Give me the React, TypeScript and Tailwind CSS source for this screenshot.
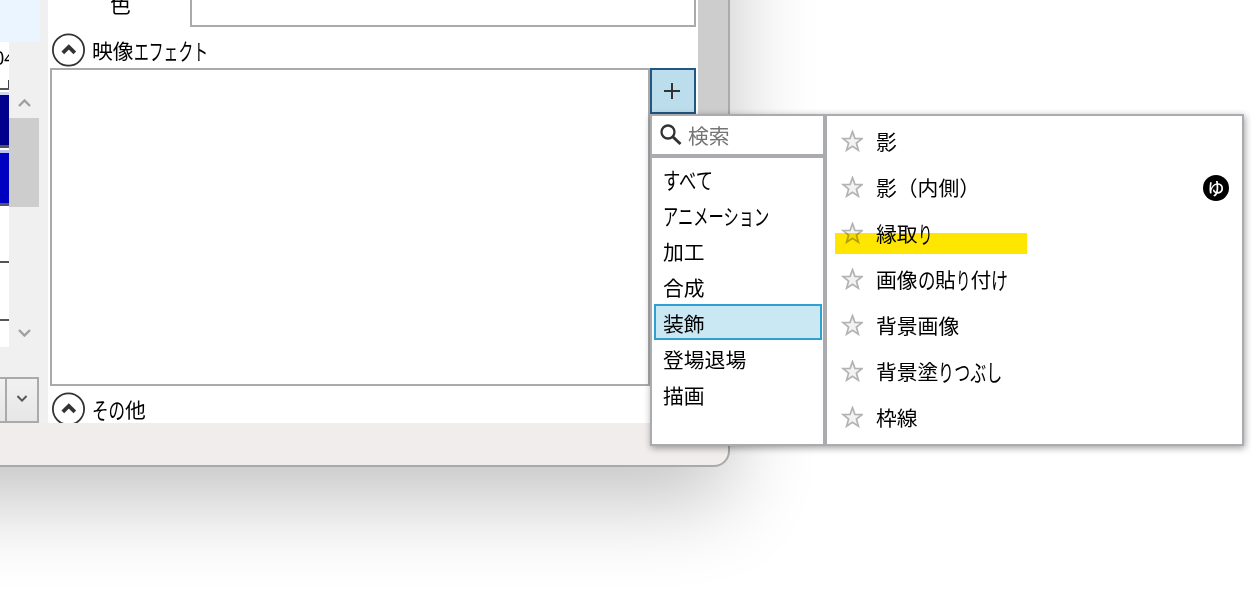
import React from "react";

type Run = [text: string, width: number];

const KANJI = 20.8;

/* Kanji keep their full width; kana runs are condensed to the given width. */
function Label({ runs, className = "" }: { runs: Run[]; className?: string }) {
  return (
    <span className={`flex whitespace-nowrap text-[20.8px] leading-[30px] ${className}`}>
      {runs.map(([text, width], i) => {
        const scale = width / (text.length * KANJI);
        return (
          <span key={i} className="block" style={{ width }}>
            <span
              className="block w-max origin-left"
              style={scale < 0.99 ? { transform: `scale(${scale}, 1.08)` } : undefined}
            >
              {text}
            </span>
          </span>
        );
      })}
    </span>
  );
}

const kanji = (text: string): Run => [text, text.length * KANJI];

const categories: { runs: Run[]; selected?: boolean }[] = [
  { runs: [["すべて", 52]] },
  { runs: [["アニメーション", 107]] },
  { runs: [kanji("加工")] },
  { runs: [kanji("合成")] },
  { runs: [kanji("装飾")], selected: true },
  { runs: [kanji("登場退場")] },
  { runs: [kanji("描画")] },
];

const effects: { runs: Run[]; marked?: boolean; badge?: boolean }[] = [
  { runs: [kanji("影")] },
  { runs: [kanji("影（内側）")], badge: true },
  { runs: [kanji("縁取"), ["り", 14.5]], marked: true },
  { runs: [kanji("画像"), ["の", 17.5], kanji("貼"), ["り", 14.5], kanji("付"), ["け", 17]] },
  { runs: [kanji("背景画像")] },
  { runs: [kanji("背景塗"), ["りつぶし", 64]] },
  { runs: [kanji("枠線")] },
];

function Chevron({ up, className }: { up?: boolean; className: string }) {
  return (
    <svg viewBox="0 0 12 8" className={className} fill="none" stroke="currentColor" strokeWidth="2.4">
      <path d={up ? "M0.5 7 6 1.5 11.5 7" : "M0.5 1 6 6.5 11.5 1"} />
    </svg>
  );
}

function SectionHeader({ runs }: { runs: Run[] }) {
  return (
    <div className="flex h-[34px] items-center pl-1">
      <svg viewBox="0 0 34 34" className="size-[34px] shrink-0" fill="none" stroke="#333">
        <circle cx="16.5" cy="17" r="15.6" strokeWidth="1.8" />
        <path d="M10.8 19.9 16.8 14 22.8 19.9" strokeWidth="3.8" />
      </svg>
      <Label runs={runs} className="ml-[6px]" />
    </div>
  );
}

function Star() {
  return (
    <svg viewBox="0 0 22 22" className="-mt-[2px] size-[22px] shrink-0" fill="#f3f3f3" stroke="#b3b3b3" strokeWidth="1.7">
      <path d="M11.5 1.6 13.9 8.4 21 8.6 15.4 13 17.4 20.2 11.5 16.2 5.6 20.2 7.6 13 2 8.6 9.1 8.4Z" />
    </svg>
  );
}

function Timeline() {
  return (
    <div className="w-12 shrink-0 bg-[#f0f0f0]">
      <div className="h-[42px] w-10 bg-[#ebf5ff]" />
      <div className="flex h-[305px]">
        <div className="w-[9px] overflow-hidden bg-white">
          <div className="relative h-[48px] border-b-2 border-[#555]">
            <span className="block -ml-[7px] w-max pt-[3px] font-['Open_Sans'] text-[20px] leading-[26px] tracking-[-0.5px]">04</span>
            <span className="absolute bottom-0 right-0 h-2 w-px bg-[#444]" />
          </div>
          <div className="h-[2px] bg-white" />
          <div className="h-[3px] bg-[#d2d6f2]" />
          <div className="h-[50px] bg-[#00008b]" />
          <div className="h-[3px] bg-[#555]" />
          <div className="h-[2px] bg-white" />
          <div className="h-[3px] bg-[#b8c1f0]" />
          <div className="h-[50px] bg-[#0000c0]" />
          <div className="h-[3px] bg-[#555570]" />
          <div className="h-[57px] border-b-2 border-[#555]" />
          <div className="h-[58px] border-b-2 border-[#555]" />
        </div>
        <div className="flex w-[30px] flex-col items-center pl-px text-[#a0a0a0]">
          <Chevron up className="mt-[57px] h-2 w-[13px]" />
          <div className="-ml-px mt-[11px] h-[89px] w-[30px] bg-[#cdcdcd]" />
          <Chevron className="mt-[122px] h-2 w-[13px]" />
        </div>
      </div>
      <div className="mt-[30px] flex h-[46px] w-[39px] border-2 border-l-0 border-[#aaa] bg-linear-to-b from-[#f1f1f1] to-[#e6e6e6]">
        <div className="w-[7px] border-r-2 border-[#aaa]" />
        <div className="flex flex-1 items-center justify-center text-[#555]">
          <Chevron className="mb-[4px] h-[7px] w-[10px]" />
        </div>
      </div>
    </div>
  );
}

function Properties() {
  return (
    <div className="flex w-[650px] shrink-0 flex-col overflow-hidden bg-white">
      <div className="flex h-[27px] shrink-0">
        <Label runs={[kanji("色")]} className="-mt-[11px] ml-[62px] w-20" />
        <div className="h-[27px] w-[506px] border-2 border-t-0 border-[#aaa]" />
      </div>
      <div className="mt-[6px] shrink-0">
        <SectionHeader runs={[kanji("映像"), ["エフェクト", 74]]} />
      </div>
      <div className="mt-px flex h-[318px] shrink-0 pl-[2px]">
        <div className="h-full w-[600px] border-2 border-[#aaa]" />
        <button className="flex size-[46px] items-center justify-center border-2 border-[#235680] bg-[#bcddeb]">
          <svg viewBox="0 0 16 16" className="mr-[2px] size-4" stroke="#333" strokeWidth="2">
            <path d="M8 0V16M0 8H16" />
          </svg>
        </button>
      </div>
      <div className="mt-[6px] shrink-0">
        <SectionHeader runs={[["その", 33], kanji("他")]} />
      </div>
    </div>
  );
}

function EffectMenu() {
  return (
    <div className="absolute left-[650px] top-[114px] flex h-[332px] w-[594px] border-2 border-[#a9abae] bg-white shadow-[1px_2px_7px_rgba(0,0,0,0.38)]">
      <div className="flex w-[175px] shrink-0 flex-col border-r-4 border-[#a9abae]">
        <div className="flex h-[42px] items-center border-b-4 border-[#a9abae] pl-2">
          <svg viewBox="0 0 22 22" className="size-[22px]" fill="none" stroke="#333">
            <circle cx="8" cy="8" r="6.5" strokeWidth="2.3" />
            <path d="M12.5 12.5 20.5 20" strokeWidth="3" />
          </svg>
          <Label runs={[kanji("検索")]} className="-mt-px ml-[6px] text-[#757575]" />
        </div>
        <ul className="px-[2px] pt-[2px]">
          {categories.map(({ runs, selected }, i) => (
            <li
              key={i}
              className={`flex h-9 w-[168px] items-center border-2 pl-[7px] ${
                selected ? "border-[#309fd2] bg-[#cae7f4]" : "border-transparent"
              }`}
            >
              <Label runs={runs} className="pt-px" />
            </li>
          ))}
        </ul>
      </div>
      <ul className="flex-1 pt-[3px]">
        {effects.map(({ runs, marked, badge }, i) => (
          <li key={i} className="relative flex h-[46px] items-center pl-[14px]">
            <Star />
            <Label runs={runs} className="-mt-[2px] ml-[13px]" />
            {badge && (
              <span className="-mt-px ml-auto mr-[13px] flex size-[26px] items-center justify-center rounded-full bg-black text-[17px] font-medium leading-none text-white">
                ゆ
              </span>
            )}
            {marked && (
              <span className="absolute left-2 top-[22px] h-[21px] w-48 bg-[#ffe600] mix-blend-multiply" />
            )}
          </li>
        ))}
      </ul>
    </div>
  );
}

export default function App() {
  return (
    <div className="relative h-[603px] w-[1252px] overflow-hidden bg-white font-['Noto_Sans_CJK_JP',sans-serif] text-black">
      <div className="-ml-[300px] -mt-[300px] h-[767px] w-[1030px] rounded-br-[16px] border-b-2 border-r-2 border-[#aaa] bg-[#f0edec] pl-[300px] pt-[300px] shadow-[0_34px_86px_rgba(0,0,0,0.24)]">
        <div className="flex h-[423px]">
          <Timeline />
          <Properties />
          <div className="flex-1 bg-[#cdcdcd]" />
        </div>
      </div>
      <EffectMenu />
    </div>
  );
}
